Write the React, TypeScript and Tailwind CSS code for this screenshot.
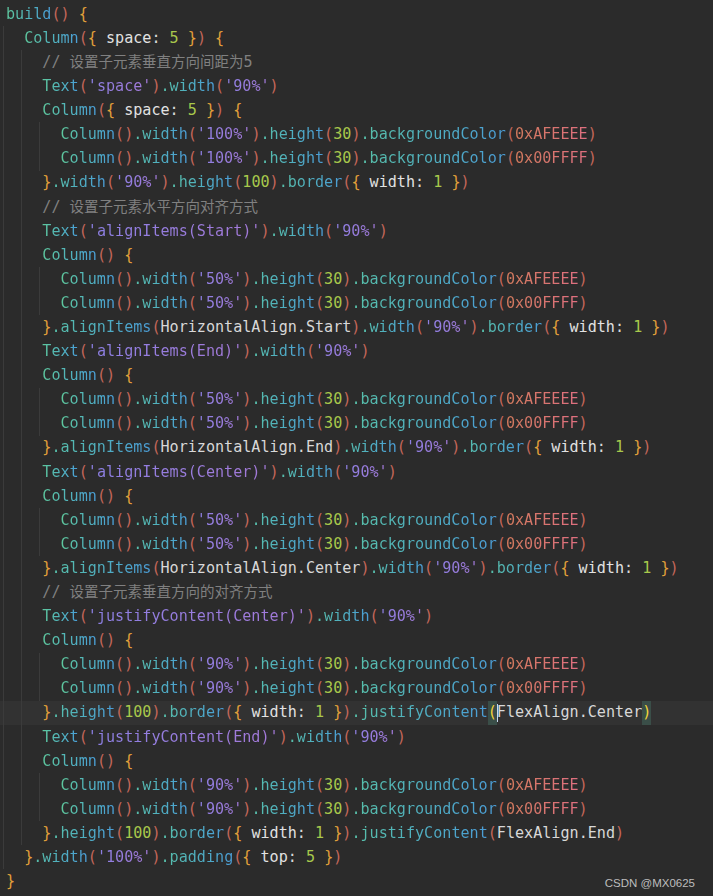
import type { ReactNode } from 'react';

const LINES: string[] = [
  'build() {',
  '  Column({ space: 5 }) {',
  '    // 设置子元素垂直方向间距为5',
  "    Text('space').width('90%')",
  '    Column({ space: 5 }) {',
  "      Column().width('100%').height(30).backgroundColor(0xAFEEEE)",
  "      Column().width('100%').height(30).backgroundColor(0x00FFFF)",
  "    }.width('90%').height(100).border({ width: 1 })",
  '    // 设置子元素水平方向对齐方式',
  "    Text('alignItems(Start)').width('90%')",
  '    Column() {',
  "      Column().width('50%').height(30).backgroundColor(0xAFEEEE)",
  "      Column().width('50%').height(30).backgroundColor(0x00FFFF)",
  "    }.alignItems(HorizontalAlign.Start).width('90%').border({ width: 1 })",
  "    Text('alignItems(End)').width('90%')",
  '    Column() {',
  "      Column().width('50%').height(30).backgroundColor(0xAFEEEE)",
  "      Column().width('50%').height(30).backgroundColor(0x00FFFF)",
  "    }.alignItems(HorizontalAlign.End).width('90%').border({ width: 1 })",
  "    Text('alignItems(Center)').width('90%')",
  '    Column() {',
  "      Column().width('50%').height(30).backgroundColor(0xAFEEEE)",
  "      Column().width('50%').height(30).backgroundColor(0x00FFFF)",
  "    }.alignItems(HorizontalAlign.Center).width('90%').border({ width: 1 })",
  '    // 设置子元素垂直方向的对齐方式',
  "    Text('justifyContent(Center)').width('90%')",
  '    Column() {',
  "      Column().width('90%').height(30).backgroundColor(0xAFEEEE)",
  "      Column().width('90%').height(30).backgroundColor(0x00FFFF)",
  '    }.height(100).border({ width: 1 }).justifyContent(FlexAlign.Center)',
  "    Text('justifyContent(End)').width('90%')",
  '    Column() {',
  "      Column().width('90%').height(30).backgroundColor(0xAFEEEE)",
  "      Column().width('90%').height(30).backgroundColor(0x00FFFF)",
  '    }.height(100).border({ width: 1 }).justifyContent(FlexAlign.End)',
  "  }.width('100%').padding({ top: 5 })",
  '}',
];

// line with the cursor in it (0-based)
const CURRENT = 29;

const CLS = {
  fn: 'bg-linear-to-r from-[#5ec79c] to-[#4a9ed8] bg-clip-text text-transparent',
  method: 'bg-linear-to-r from-[#58c0a8] to-[#4b9cd6] bg-clip-text text-transparent',
  str: 'bg-linear-to-r from-[#8c80e4] to-[#a479d8] bg-clip-text text-transparent',
  num: 'text-[#a8c84c]',
  hex: 'bg-linear-to-r from-[#d27a5c] to-[#df6f80] bg-clip-text text-transparent',
  paren: 'text-[#c4675a]',
  brace: 'text-[#e2a03a]',
  key: 'text-[#e2e2e2]',
  plain: 'text-[#d8d8d8]',
  comment: 'text-[#808080]',
};

type Tok = { text: string; cls: string };

const tokenize = (src: string): Tok[] => {
  const re = /(\/\/.*)|('[^']*')|(0x[0-9A-Fa-f]+|\d+)|(\.?[A-Za-z_]\w*)|([()])|([{}])|(\s+)|(.)/g;
  const out: Tok[] = [];
  let m: RegExpExecArray | null;
  while ((m = re.exec(src))) {
    const [t, comment, str, num, ident, paren, brace] = m;
    if (comment) out.push({ text: t, cls: CLS.comment });
    else if (str) out.push({ text: t, cls: CLS.str });
    else if (num) out.push({ text: t, cls: t.startsWith('0x') ? CLS.hex : CLS.num });
    else if (ident) {
      const rest = src.slice(re.lastIndex).trimStart();
      if (rest.startsWith('(')) out.push({ text: t, cls: t.startsWith('.') ? CLS.method : CLS.fn });
      else if (rest.startsWith(':')) out.push({ text: t, cls: CLS.key });
      else out.push({ text: t, cls: CLS.plain });
    } else if (paren) out.push({ text: t, cls: CLS.paren });
    else if (brace) out.push({ text: t, cls: CLS.brace });
    else out.push({ text: t, cls: CLS.plain });
  }
  return out;
};

const Comment = ({ text }: { text: string }) => {
  const [, slash, cjk, tail] = /^(\/\/ )(.*?)(\d*)$/.exec(text) ?? ['', text, '', ''];
  return (
    <span className={CLS.comment}>
      {slash}
      <span className="font-['Noto_Sans_CJK_SC',sans-serif] text-[14.5px]">{cjk}</span>
      {tail}
    </span>
  );
};

const CodeLine = ({ src, current }: { src: string; current: boolean }) => {
  const indent = src.length - src.trimStart().length;
  const toks = tokenize(src.trimStart());
  const lastOpen = current ? toks.map((t) => t.text).lastIndexOf('(') : -1;
  const lastClose = current ? toks.map((t) => t.text).lastIndexOf(')') : -1;

  const body: ReactNode[] = toks.map((t, i) => {
    if (t.cls === CLS.comment) return <Comment key={i} text={t.text} />;
    if (i === lastOpen || i === lastClose) {
      return (
        <span key={i} className="flex h-full items-center bg-[#3a4e48] text-[#f2d43a]">
          {t.text}
          {i === lastOpen && <span className="-mr-px inline-block h-[18px] w-px bg-[#c8d8f0]" />}
        </span>
      );
    }
    return (
      <span key={i} className={t.cls}>
        {t.text}
      </span>
    );
  });

  return (
    <div className={`flex h-[24.1px] items-center whitespace-pre pl-[3px] ${current ? 'bg-[#323232]' : ''}`}>
      {Array.from({ length: indent / 2 }).map((_, i) => (
        <span key={i} className="h-full w-[18.18px] shrink-0 border-l border-[#3b3b3b]" />
      ))}
      <div className="ml-[3px] flex h-full items-center">{body}</div>
    </div>
  );
};

const App = () => {
  return (
    <div className="relative h-[896px] w-[713px] overflow-hidden bg-[#2b2b2b] pt-[2px] font-['DejaVu_Sans_Mono','Noto_Sans_CJK_SC',monospace] text-[15.1px]">
      {LINES.map((src, i) => (
        <CodeLine key={i} src={src} current={i === CURRENT} />
      ))}
      <div className="absolute bottom-[4px] right-[18px] font-['Liberation_Sans',sans-serif] text-[11.5px] text-[#bdbdbd]">
        CSDN @MX0625
      </div>
    </div>
  );
};

export default App;
